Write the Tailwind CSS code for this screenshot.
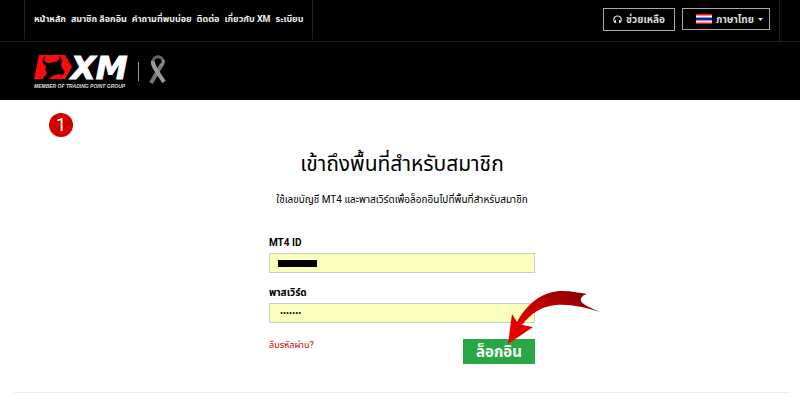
<!DOCTYPE html>
<html lang="th">

<head>
    <meta charset="UTF-8">
    <meta name="viewport" content="width=device-width, initial-scale=1.0">
    <title>XM - เข้าถึงพื้นที่สำหรับสมาชิก</title>
    <script src="https://cdn.jsdelivr.net/npm/@tailwindcss/browser@4"></script>
</head>

<body class="bg-white text-black font-['Roboto','Noto_Sans_Thai','Noto_Sans',sans-serif]">

    <header class="bg-black text-white">
        <!-- Top bar -->
        <div class="border-b border-[#1c1c1c] pl-6 pr-5">
            <div class="flex h-[41px] items-start justify-between border-r border-[#222]">
                <nav class="flex h-[39px] items-center gap-[5px] border-x border-[#222] px-[9px] text-[9px] font-bold whitespace-nowrap text-[#eee]">
                    <a href="#">หน้าหลัก</a>
                    <a href="#">สมาชิก ล็อกอิน</a>
                    <a href="#">คำถามที่พบบ่อย</a>
                    <a href="#">ติดต่อ</a>
                    <a href="#">เกี่ยวกับ XM</a>
                    <a href="#">ระเบียบ</a>
                </nav>
                <div class="flex items-start gap-[7px] pt-2 pr-[9px] text-[10px] font-bold whitespace-nowrap text-[#ddd]">
                    <button type="button" class="flex h-[23px] w-[72px] items-center justify-center gap-1 border border-[#aaa]">
                        <svg class="size-[9px]" viewBox="0 0 9 9" fill="none" stroke="#ddd" stroke-width="1.2">
                            <path d="M2.5 7.8C-.3 6 .4 1 4.5 1S9.3 6 6.5 7.8M2.5 5v3M6.500 5v3" />
                        </svg>
                        ช่วยเหลือ
                    </button>
                    <button type="button" class="flex h-[22px] w-[88px] items-center justify-end gap-1 border border-[#aaa] pr-[6px]">
                        <svg class="h-[10px] w-4" viewBox="0 0 16 10">
                            <path fill="#f01818" d="M0 0h16v10H0z" />
                            <path fill="#fff" d="M0 1.500h16v7H0z" />
                            <path fill="#1c1c9c" d="M0 3.500h16v3H0z" />
                        </svg>
                        ภาษาไทย
                        <svg class="h-[3px] w-[5px]" viewBox="0 0 5 3">
                            <path fill="#ddd" d="M0 0h5L2.500 3z" />
                        </svg>
                    </button>
                </div>
            </div>
        </div>

        <!-- Logo -->
        <div class="flex h-[58px] items-center pl-[33px]">
            <a href="#" aria-label="XM">
                <svg class="h-[38px] w-[136px] overflow-visible" viewBox="0 0 136 38">
                    <path fill="#ff0a0a" d="M6 3h26l7 12-7 12H1z" />
                    <path fill="#000" d="M13 4C10 8 12 11 16 11C19 11 22 10 24 9C27 8 27 7 26 4C30 7 29 10 28 12L29 16L32 20C31 23 28 24 26 22L22 23C19 24 17 25 16 27H10C11 24 14 23 14 20C12 19 12 17 13 14C9 12 8 7 13 4z" />
                    <text x="38" y="27" font-family="DejaVu Sans, sans-serif" font-size="32" font-weight="700" font-style="italic" fill="#fff" stroke="#fff">XM</text>
                    <text x="1" y="36" font-family="Liberation Sans, sans-serif" font-size="5" font-weight="700" font-style="italic" fill="#ddd">MEMBER OF TRADING POINT GROUP</text>
                    <path stroke="#999" d="M105.500 10v19" />
                    <!-- Ribbon -->
                    <path fill="none" stroke="#777" stroke-width="4" d="M118 31L129 12" />
                    <path fill="none" stroke="#666" stroke-width="3" d="M120 10C120 3 130 3 130 10" />
                    <path fill="none" stroke="#999" stroke-width="4" d="M120 9C119 13 123 18 131 30" />
                    <path fill="none" stroke="#888" stroke-width="3" d="M130 8C131 10 130 12 128 14" />
                </svg>
            </a>
        </div>
    </header>

    <main class="relative pl-[14px] pr-[10px]">
        <!-- Step badge -->
        <span class="absolute top-[13px] left-[49px] flex size-6 items-center justify-center rounded-full bg-[#d20000] text-lg text-white">1</span>

        <section class="flex h-[293px] flex-col items-center border-b border-[#eee] pt-[50px]">
            <h1 class="text-[21px] leading-7 whitespace-nowrap">เข้าถึงพื้นที่สำหรับสมาชิก</h1>
            <p class="mt-[14px] text-[10px] leading-4 whitespace-nowrap">ใช้เลขบัญชี MT4 และพาสเวิร์ดเพื่อล็อกอินไปที่พื้นที่สำหรับสมาชิก</p>

            <form class="relative mt-[27px] w-[266px]">
                <label for="mt4-id" class="block text-[10px] leading-4 font-bold">MT4 ID</label>
                <div class="relative mt-[2px]">
                    <input id="mt4-id" type="text" class="block h-5 w-full border border-[#ccc] bg-[#faffbd] px-[10px] text-[10px]">
                    <span class="absolute top-[7px] left-[9px] h-[7px] w-[39px] bg-black"></span>
                </div>
                <label for="password" class="mt-3 block text-[10px] leading-4 font-bold">พาสเวิร์ด</label>
                <input id="password" type="password" value="1234567" class="mt-[2px] block h-5 w-full border border-[#ccc] bg-[#faffbd] px-[10px] text-[9px]">
                <div class="mt-4 flex items-start justify-between">
                    <a href="#" class="text-[9px] leading-3 text-[#d20000]">ลืมรหัสผ่าน?</a>
                    <button type="submit" class="h-[25px] w-[72px] bg-[#28a745] text-[15px] leading-6 font-bold text-white">ล็อกอิน</button>
                </div>

                <!-- Arrow pointing at the login button -->
                <svg class="absolute top-[55px] left-[231px] h-[56px] w-[102px]" viewBox="0 0 102 56">
                    <defs>
                        <linearGradient id="arrow" x1="0" y1="1" x2="1" y2="0">
                            <stop offset="0" stop-color="#f40000" />
                            <stop offset=".5" stop-color="#c80000" />
                            <stop offset="1" stop-color="#750000" />
                        </linearGradient>
                    </defs>
                    <path fill="url(#arrow)" d="M8 54L12 24L17 32C29 10 46 1 62 1C72 1 80 3 87 4C83 5 80 8 81 11C83 15 91 18 100 22C84 17 70 14 56 15C42 16 30 24 22 35L33 37z" />
                </svg>
            </form>
        </section>
    </main>

</body>

</html>
